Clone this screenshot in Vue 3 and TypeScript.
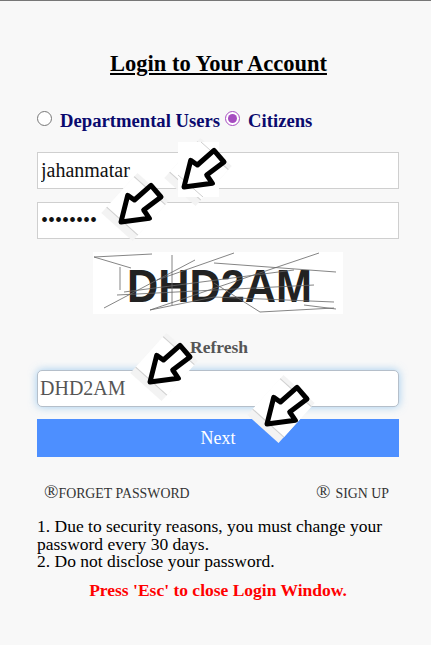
<script setup lang="ts">
interface Marker { id: number; left: number; top: number; backed: boolean }
const markers: Marker[] = [
  { id: 1, left: 158, top: 132, backed: true },
  { id: 2, left: 95, top: 167, backed: false },
  { id: 3, left: 124, top: 327, backed: false },
  { id: 4, left: 241, top: 369, backed: false },
]
const noise: [number, number, number, number][] = [
  [1, 5, 59, 2], [1, 5, 38, 16], [27, 15, 27, 38], [11, 56, 102, 8], [79, 3, 79, 53],
  [64, 28, 141, 1], [121, 11, 243, 20], [57, 58, 226, 1], [24, 43, 221, 33], [31, 40, 201, 18],
  [57, 58, 121, 45], [121, 45, 241, 50], [167, 60, 241, 56], [121, 31, 167, 60], [211, 53, 243, 57],
]
</script>

<template>
  <main class="page">
    <h1 class="title">Login to Your Account</h1>

    <div class="roles">
      <input class="radio" type="radio" name="role" />
      <label class="role">Departmental Users</label>
      <input class="radio" type="radio" name="role" checked />
      <label class="role">Citizens</label>
    </div>

    <input class="field" type="text" value="jahanmatar" />
    <input class="field second" type="password" value="12345678" />

    <svg class="captcha" viewBox="0 0 250 62" role="img" aria-label="captcha">
      <rect width="250" height="62" fill="#fff" />
      <text class="captcha-text" x="34" y="50" textLength="185" lengthAdjust="spacingAndGlyphs">DHD2AM</text>
      <line v-for="(l, i) in noise" :key="i" :x1="l[0]" :y1="l[1]" :x2="l[2]" :y2="l[3]" class="noise" />
    </svg>

    <div class="refresh">Refresh</div>

    <input class="field focused" type="text" value="DHD2AM" />
    <button class="next" type="button">Next</button>

    <div class="links">
      <a class="link"><span class="mark">®</span>FORGET PASSWORD</a>
      <a class="link"><span class="mark gap">®</span>SIGN UP</a>
    </div>

    <p class="notes">
      1. Due to security reasons, you must change your password every 30 days.<br />
      2. Do not disclose your password.
    </p>
    <p class="esc">Press 'Esc' to close Login Window.</p>

    <svg
      v-for="m in markers"
      :key="m.id"
      class="marker"
      :style="{ left: m.left + 'px', top: m.top + 'px' }"
      viewBox="0 0 80 80"
      aria-hidden="true"
    >
      <g transform="rotate(42 40 40)">
        <rect x="19" y="13" width="42" height="54" fill="#f3f3f3" />
        <rect x="19" y="18" width="42" height="41" fill="#fff" />
        <line x1="19" y1="18" x2="61" y2="18" stroke="#cfcfcf" />
        <line x1="19" y1="59" x2="61" y2="59" stroke="#cfcfcf" />
      </g>
      <rect v-if="m.backed" x="20" y="10" width="41" height="55" fill="#fff" />
      <line v-if="m.backed" x1="43" y1="10" x2="61" y2="26" stroke="#cfcfcf" />
      <line v-if="m.backed" x1="20" y1="43" x2="45" y2="65" stroke="#cfcfcf" />
      <polygon
        points="26,55 32.7,28.4 39.4,33 56,18.4 66,30 48.7,43 54.4,51.3"
        fill="#fff"
        stroke="#000"
        stroke-width="5"
        stroke-linejoin="round"
      />
    </svg>
  </main>
</template>

<style>
html, body { margin: 0; background: #f8f8f8; }
</style>

<style scoped>
.page {
  position: relative;
  box-sizing: border-box;
  width: 431px;
  height: 645px;
  padding: 50px 32px 0 37px;
  overflow: hidden;
  display: flex;
  flex-direction: column;
  align-items: flex-start;
  background: #f8f8f8;
  border-top: 1px solid #777;
  font-family: "Liberation Serif", serif;
  color: #000;
}
.title {
  align-self: center;
  margin: 0 0 0 1px;
  font-size: 22.5px;
  line-height: 25px;
  font-weight: 700;
  text-decoration: underline;
}
.roles {
  display: flex;
  align-items: center;
  margin-top: 33px;
  height: 24px;
}
.radio {
  width: 15px;
  height: 15px;
  margin: -5px 0 0;
  accent-color: #a64cc0;
}
.role {
  margin-left: 8px;
  margin-right: 5px;
  font-size: 18.67px;
  font-weight: 700;
  color: #0a0a6e;
}
.field {
  box-sizing: border-box;
  display: block;
  flex: none;
  width: 362px;
  height: 37px;
  margin: 0;
  padding: 0 3px;
  border: 1px solid #cfcfcf;
  border-radius: 0;
  background: #fff;
  font-family: "Liberation Serif", serif;
  font-size: 20px;
  color: #111;
  outline: none;
}
.roles + .field { margin-top: 19px; }
.second { margin-top: 13px; }
.captcha {
  display: block;
  flex: none;
  width: 250px;
  height: 62px;
  margin: 13px 0 0 56px;
}
.captcha-text {
  font-family: "Liberation Sans", sans-serif;
  font-size: 47px;
  font-weight: 700;
  fill: #222;
}
.noise { stroke: #666; stroke-width: 0.8; }
.refresh {
  margin: 23px 0 0 153px;
  font-size: 17.5px;
  line-height: 20px;
  font-weight: 700;
  color: #555;
}
.focused {
  margin-top: 13px;
  padding: 0 2px;
  border: 1px solid #b5bfca;
  border-radius: 5px;
  color: #555;
  box-shadow: 0 0 8px rgba(102, 175, 233, 0.6);
}
.next {
  display: block;
  flex: none;
  width: 362px;
  height: 38px;
  margin-top: 12px;
  border: 0;
  padding: 0;
  background: #4d8fff;
  color: #fff;
  font-family: "Liberation Serif", serif;
  font-size: 18px;
}
.links {
  display: flex;
  justify-content: space-between;
  box-sizing: border-box;
  width: 362px;
  margin-top: 24px;
  padding: 0 10px 0 7px;
  height: 22px;
  align-items: center;
}
.link {
  font-size: 13.85px;
  color: #333;
}
.mark { font-size: 19px; line-height: 1; }
.mark.gap { margin-right: 5px; }
.notes {
  width: 362px;
  margin: 15px 0 0;
  font-size: 17.5px;
  line-height: 17.5px;
}
.esc {
  align-self: center;
  margin: 9px 0 0 0;
  font-size: 17.5px;
  line-height: 20px;
  font-weight: 700;
  color: #f00;
}
.marker {
  position: absolute;
  width: 80px;
  height: 80px;
  margin-top: -1px;
}
</style>
